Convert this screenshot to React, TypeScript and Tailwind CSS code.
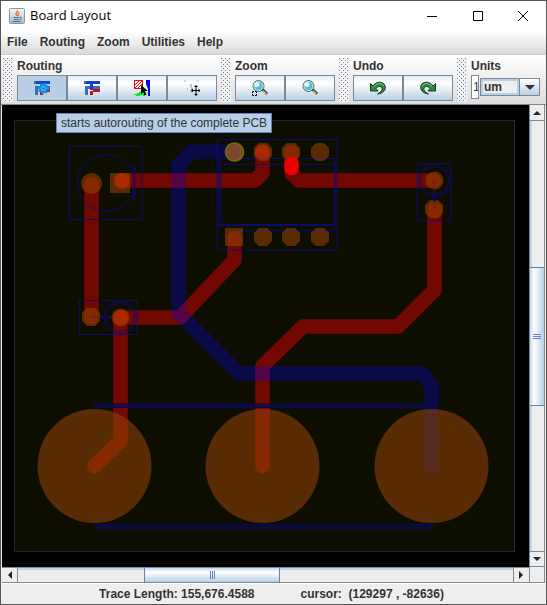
import type { ReactNode } from "react";

const octagon = (cx: number, cy: number, r: number) => {
  const k = r * 0.45;
  return [
    [cx - k, cy - r], [cx + k, cy - r], [cx + r, cy - k], [cx + r, cy + k],
    [cx + k, cy + r], [cx - k, cy + r], [cx - r, cy + k], [cx - r, cy - k],
  ].map((p) => p.join(",")).join(" ");
};

function JavaIcon() {
  return (
    <svg className="size-4 shrink-0" viewBox="0 0 16 16" aria-hidden="true">
      <defs>
        <linearGradient id="java" x1="0" y1="0" x2="0" y2="1">
          <stop offset="0" stopColor="#f6f8fa" />
          <stop offset="1" stopColor="#a9b9c6" />
        </linearGradient>
      </defs>
      <rect x="0.5" y="0.5" width="15" height="15" rx="1" fill="url(#java)" stroke="#8497a6" />
      <path d="M8.5 2C9.500 4 6 5 7 6.500l1 1.500M10.500 4.500C8.500 5.500 8.500 6.500 9.500 8" fill="none" stroke="#e5641e" strokeWidth="1.200" />
      <path d="M4.500 9.500h6M5 11.500h5M3.500 13.500h8M11 9q2 0 1 2l-1.500.7" fill="none" stroke="#466d90" strokeWidth="1" />
    </svg>
  );
}

function TraceShape() {
  return (
    <>
      <path d="M1 6h5v3H4v6H1zM9 6h7v3H9zM0 1h4v3H0z" fill="#3b6bb5" />
      <path d="M2 1h14v3H2zM6 4h3v6H6z" fill="#173fd0" />
      <path d="M9 9h7v3H9v3H6v-4h3z" fill="#c31212" />
    </>
  );
}

function AutorouteIcon() {
  return (
    <svg className="size-4" viewBox="0 0 16 16" shapeRendering="crispEdges" aria-hidden="true">
      <TraceShape />
      <g shapeRendering="auto">
        <circle cx="9.500" cy="8.500" r="3.500" fill="#7cc5ef" stroke="#0b91ea" strokeWidth="2.500" />
        <circle cx="9.500" cy="8.500" r="5" fill="none" stroke="#0b91ea" strokeWidth="1.300" strokeDasharray="2 1.900" />
        <circle cx="9.500" cy="8.500" r="1.300" fill="#1670bd" />
      </g>
    </svg>
  );
}

function TraceIcon() {
  return (
    <svg className="size-4" viewBox="0 0 16 16" shapeRendering="crispEdges" aria-hidden="true">
      <TraceShape />
    </svg>
  );
}

function SelectIcon() {
  return (
    <svg className="size-4" viewBox="0 0 16 16" aria-hidden="true">
      <rect x="0.500" y="0.500" width="8" height="8" fill="#fff" stroke="#f00" />
      <path d="M1 5l4-4M1 8l7-7M4 8l4-4" stroke="#f00" />
      <path d="M12 0h4v16h-2V9l-2-5z" fill="#0000ee" />
      <path d="M0 14h3v-1h2v-1h4v2h2v2H9v-1H6v1H2v-1H0z" fill="#00f020" />
      <path d="M7 5v9l2-2 1.500 3.500 2-1L11 11h3z" fill="#000" />
    </svg>
  );
}

function MoveIcon() {
  return (
    <svg className="size-4" viewBox="0 0 16 16" aria-hidden="true">
      <path d="M0 1h2M1 0v2M12 1h3M1 15h2M12 15h2" stroke="#c4ccd4" />
      <path d="M7 4v9M3 9h6" stroke="#a9b0b6" strokeWidth="1.500" />
      <path d="M4 7h3v3H4z" fill="#eef2f5" />
      <path d="M12 6v9M8 10.500h8" stroke="#000" />
      <path d="M12 5l2 2h-4zM12 16l2-2h-4zM7 10.500l2-2v4zM16.500 10.500l-2-2v4z" fill="#000" />
    </svg>
  );
}

function LensIcon({ area }: { area?: boolean }) {
  return (
    <svg className="size-4 overflow-visible" viewBox="0 0 16 16" aria-hidden="true">
      <path d="M10 9l5 5" stroke="#4e493e" strokeWidth="3" />
      <path d="M11 11l3 3" stroke="#e7ca75" strokeWidth="1.500" />
      <circle cx="6.500" cy="6" r="5.500" fill="#56bdd0" stroke="#526b72" />
      <circle cx="6.500" cy="6" r="4.500" fill="none" stroke="#c6e8ec" />
      <ellipse cx="5" cy="4.500" rx="2.500" ry="2.500" fill="#e5fcff" />
      {area && <path d="M.5 13v-1.500H2M3 11.500h1.500V13M.5 14v1.500H2M3 15.500h1.500V14" fill="none" stroke="#000" />}
    </svg>
  );
}

function TurnIcon({ redo }: { redo?: boolean }) {
  return (
    <svg className={redo ? "size-4 -scale-x-100" : "size-4"} viewBox="0 0 16 16" aria-hidden="true">
      <path d="M3 6C6 1 13 1 15 5.500C16.500 10 12.500 13.500 7.500 14C11.500 12 13 9.500 11.500 7.500C10 5.500 7.500 6.500 6 8.500L8 11H.5V3.500z" fill="#2d8a41" stroke="#123e20" />
      <path d="M4 6.500C8 2 12 3 14 6" fill="none" stroke="#7fcf8a" />
    </svg>
  );
}

function Grip() {
  return (
    <svg className="h-11 w-2.5 shrink-0" aria-hidden="true">
      <defs>
        <pattern id="grip" width="4" height="4" patternUnits="userSpaceOnUse">
          <rect width="4" height="4" fill="#f2f2f2" />
          <rect width="1" height="1" fill="#71839a" />
          <rect x="2" y="2" width="1" height="1" fill="#71839a" />
        </pattern>
      </defs>
      <rect width="100%" height="100%" fill="url(#grip)" />
    </svg>
  );
}

function ToolButton({ label, active, children }: { label: string; active?: boolean; children: ReactNode }) {
  return (
    <button
      aria-label={label}
      className={`flex h-[26px] w-[50px] items-center justify-center border border-[#7a8a99] ${
        active ? "bg-[#b8cfe5]" : "bg-linear-to-b from-[#e3ecf4] via-white via-30% to-[#b8cfe5]"
      }`}
    >
      {children}
    </button>
  );
}

function ToolGroup({ title, children }: { title: string; children: ReactNode }) {
  return (
    <div className="flex shrink-0 gap-1">
      <Grip />
      <div>
        <h2 className="h-[17px] leading-4">{title}</h2>
        <div className="flex">{children}</div>
      </div>
    </div>
  );
}

function Arrow({ points }: { points: string }) {
  return (
    <svg className="size-2" viewBox="0 0 8 8" aria-hidden="true">
      <polygon points={points} fill="#222" />
    </svg>
  );
}

const outline = "#0a0a8c";

function Board() {
  return (
    <svg className="block h-full w-full bg-black" viewBox="2 105 527 462" role="img" aria-label="Circuit board">
      <rect x="14.500" y="120.500" width="500" height="431" fill="#0e0e00" stroke="#1a2838" />
      <g fill="none" stroke="#f00" strokeWidth="14.500" strokeLinecap="round" strokeLinejoin="round" opacity="0.420">
        <path d="M91.500 184V317M122 180.500H255L262.500 173V152M291.500 152V173L299 180.500H434M120.500 317.500H180L234.500 260V238M120.500 317.500V441L94.500 466M434.500 209V290L398 326.500H303L262.500 366V466" />
      </g>
      <path d="M234 151.500H192L178.500 165V313L239 373.500H422L431.500 386V466" fill="none" stroke="#00f" strokeWidth="14.500" strokeLinecap="round" strokeLinejoin="round" opacity="0.280" />

      <g fill="none" stroke={outline} strokeWidth="1" opacity="0.750">
        <rect x="69.500" y="146.500" width="72.500" height="73" />
        <circle cx="106" cy="183" r="28.500" />
        <path d="M133.500 165v36M135 165v36" />
        <rect x="79.500" y="300.500" width="57.500" height="34" />
        <circle cx="120" cy="317.500" r="16" />
        <circle cx="120" cy="317.500" r="14" />
        <rect x="417.500" y="163.500" width="33.500" height="57" />
        <circle cx="434.500" cy="180.500" r="16" />
        <circle cx="434.500" cy="180.500" r="14" />
        <rect x="217" y="139.500" width="120" height="110.500" />
        <path d="M219 158.500h116v72H231L220 219zM218 164.500h117v60H218zM221 158v66M218 225.500h117" />
      </g>
      <path d="M94 404.500h338M94 407h339M94 525h339M94 528h338" stroke="#090950" strokeWidth="2" />

      <g fill="#9a4700" opacity="0.530">
        <circle cx="94.500" cy="466" r="57" />
        <circle cx="262.500" cy="466" r="57" />
        <circle cx="431.500" cy="466" r="57" />
        <circle cx="91.500" cy="183.500" r="10.500" />
        <rect x="110" y="173" width="20" height="20" />
        <polygon points={octagon(91, 317, 9)} />
        <circle cx="120.500" cy="317.500" r="9" />
        <circle cx="434.500" cy="180.500" r="9" />
        <polygon points={octagon(434, 209, 9)} />
        <polygon points={octagon(263, 152, 9)} />
        <polygon points={octagon(291, 152, 9)} />
        <polygon points={octagon(320, 152, 9)} />
        <rect x="225" y="228" width="18" height="18" />
        <polygon points={octagon(263, 237, 9)} />
        <polygon points={octagon(291, 237, 9)} />
        <polygon points={octagon(320, 237, 9)} />
      </g>
      <g fill="none" stroke="#5c2858" opacity="0.450">
        {[94.5, 262.5, 431.5].map((x) => (
          <g key={x}>
            <circle cx={x} cy="466" r="54" />
            <circle cx={x} cy="466" r="23" />
          </g>
        ))}
      </g>
      <path d="M91 317h29M434.500 180v29" stroke="#551055" strokeWidth="2" opacity="0.400" />
      <path d="M103 317h6M434.500 193v8" stroke="#000090" strokeWidth="2" />
      <g fill="#e02a00" opacity="0.400">
        <circle cx="121.500" cy="181" r="8" />
        <circle cx="262.500" cy="152" r="7.500" />
        <circle cx="120.500" cy="317.500" r="7.500" />
      </g>
      <path d="M291.500 164v4" stroke="#f00" strokeWidth="14.500" strokeLinecap="round" opacity="0.850" />
      <circle cx="234.500" cy="152" r="9" fill="#78492c" stroke="#7c6c00" strokeWidth="1.500" />
    </svg>
  );
}

const thumbEdge = "border-[#6382bf]";

export default function App() {
  return (
    <div className="flex h-screen flex-col border border-[#555] bg-[#eee] font-['Liberation_Sans',Arial,sans-serif] text-[12px] font-bold text-[#333]">
      <header className="flex h-[30px] shrink-0 items-center bg-white pl-2 text-black">
        <JavaIcon />
        <h1 className="ml-[5px] flex-1 font-['Open_Sans',sans-serif] text-[13px] font-normal">Board Layout</h1>
        <button aria-label="Minimize" className="flex h-full w-[46px] items-center justify-center">
          <svg className="h-2.5 w-2.5" viewBox="0 0 10 10"><path d="M0 5.500h10" stroke="#000" /></svg>
        </button>
        <button aria-label="Maximize" className="flex h-full w-[45px] items-center justify-center">
          <svg className="h-2.5 w-2.5" viewBox="0 0 10 10"><path d="M.5.5h9v9h-9z" fill="none" stroke="#000" /></svg>
        </button>
        <button aria-label="Close" className="flex h-full w-[46px] items-center justify-center">
          <svg className="h-2.5 w-2.5" viewBox="0 0 10 10"><path d="M0 0l10 10M10 0L0 10" stroke="#000" /></svg>
        </button>
      </header>

      <nav className="flex h-6 shrink-0 items-center gap-3 border-b border-[#ccc] bg-linear-to-b from-white to-[#dadada] pb-0.5 pl-1.5">
        <button>File</button>
        <button>Routing</button>
        <button>Zoom</button>
        <button>Utilities</button>
        <button>Help</button>
      </nav>

      <div className="relative flex h-[50px] shrink-0 gap-1 overflow-visible border-b border-[#7a8a99] bg-linear-to-b from-white to-[#ddd] pt-[3px] pl-0.5">
        <ToolGroup title="Routing">
          <ToolButton label="Autoroute" active><AutorouteIcon /></ToolButton>
          <ToolButton label="Route trace"><TraceIcon /></ToolButton>
          <ToolButton label="Select items"><SelectIcon /></ToolButton>
          <ToolButton label="Move items"><MoveIcon /></ToolButton>
        </ToolGroup>
        <ToolGroup title="Zoom">
          <ToolButton label="Zoom area"><LensIcon area /></ToolButton>
          <ToolButton label="Zoom board"><LensIcon /></ToolButton>
        </ToolGroup>
        <ToolGroup title="Undo">
          <ToolButton label="Undo"><TurnIcon /></ToolButton>
          <ToolButton label="Redo"><TurnIcon redo /></ToolButton>
        </ToolGroup>
        <ToolGroup title="Units">
          <input aria-label="Unit factor" defaultValue="1" className="h-6 w-2 border border-[#7a8a99] bg-white pl-px font-normal" />
          <div className="relative ml-px flex h-[18px] w-[60px] self-center border border-[#7a8a99] bg-linear-to-b from-white to-[#b8cfe5]">
            <select aria-label="Unit" defaultValue="um" className="mr-5 w-full appearance-none border-2 border-[#b8cfe5] bg-[#eee] pl-px leading-3">
              <option>um</option>
              <option>mm</option>
              <option>mil</option>
            </select>
            <span className="pointer-events-none absolute inset-y-0 right-0 flex w-5 items-center justify-center border-l border-[#7a8a99]">
              <svg className="h-[5px] w-2.5" viewBox="0 0 10 5"><path d="M0 0h10L5 5z" fill="#333" /></svg>
            </span>
          </div>
        </ToolGroup>
        <div role="tooltip" className="absolute top-[58px] left-[55px] border border-[#6382bf] bg-[#b8cfe5] px-1 py-px leading-4 font-normal whitespace-nowrap">
          starts autorouting of the complete PCB
        </div>
      </div>

      <main className="grid min-h-0 flex-1 grid-cols-[minmax(0,1fr)_17px] grid-rows-[minmax(0,1fr)_16px] pl-px">
        <Board />
        <div className="mr-px flex min-h-0 flex-col border-x border-[#7a8a99]">
          <button aria-label="Scroll up" className="flex h-4 shrink-0 items-center justify-center border-b border-[#7a8a99]"><Arrow points="0,6 4,2 8,6" /></button>
          <div className="flex-[147_147_0%] border-l-2 border-[#c4d6e6]" />
          <div className={`flex flex-[137_137_0%] flex-col items-center justify-center gap-px border-y bg-linear-to-r from-[#c4d9ec] via-white via-30% to-[#b8cfe5] ${thumbEdge}`}>
            <span className="h-px w-2 bg-[#6382bf]" />
            <span className="h-px w-2 bg-[#6382bf]" />
            <span className="h-px w-2 bg-[#6382bf]" />
          </div>
          <div className="flex-[146_146_0%] border-l-2 border-[#c4d6e6]" />
          <button aria-label="Scroll down" className="flex h-4 shrink-0 items-center justify-center border-y border-[#7a8a99]"><Arrow points="0,2 8,2 4,6" /></button>
        </div>
        <div className="flex min-w-0 border-y border-[#7a8a99]">
          <button aria-label="Scroll left" className="flex w-4 shrink-0 items-center justify-center border-r border-[#7a8a99]"><Arrow points="6,0 6,8 2,4" /></button>
          <div className="flex-[127_127_0%] border-t-2 border-[#c4d6e6]" />
          <div className={`flex flex-[134_134_0%] items-center justify-center gap-px border-x bg-linear-to-b from-[#c4d9ec] via-white via-30% to-[#b8cfe5] ${thumbEdge}`}>
            <span className="h-2 w-px bg-[#6382bf]" />
            <span className="h-2 w-px bg-[#6382bf]" />
            <span className="h-2 w-px bg-[#6382bf]" />
          </div>
          <div className="flex-[234_234_0%] border-t-2 border-[#c4d6e6]" />
          <button aria-label="Scroll right" className="flex w-4 shrink-0 items-center justify-center border-l border-[#7a8a99]"><Arrow points="2,0 2,8 6,4" /></button>
        </div>
        <div className="mr-px border-x border-b border-[#7a8a99]" />
      </main>

      <footer className="flex h-[21px] shrink-0 items-center justify-center gap-[46px] border-t border-white pr-1">
        <p>Trace Length: 155,676.4588</p>
        <p className="whitespace-pre">cursor:  (129297 , -82636)</p>
      </footer>
    </div>
  );
}
